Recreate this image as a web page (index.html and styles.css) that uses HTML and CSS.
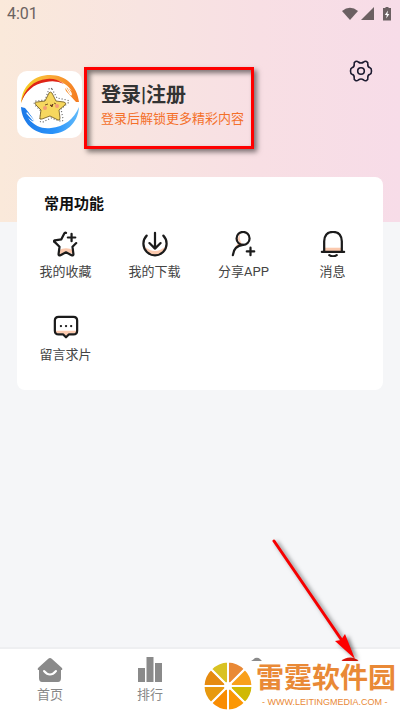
FILE: index.html
```html
<!DOCTYPE html>
<html lang="zh-CN">
<head>
<meta charset="utf-8">
<meta name="viewport" content="width=device-width, initial-scale=1">
<title>我的</title>
<link rel="stylesheet" href="styles.css">
</head>
<body>
<div class="screen">
  <header class="hero">
    <div class="status">
      <span class="time">4:01</span>
      <svg class="status-icons" width="51" height="16" viewBox="0 0 51 16" fill="#6b6062" aria-hidden="true">
        <path d="M0 5Q8-1.500 16 5L8 14Z"/>
        <path d="M19 14 32 1V14Z"/>
        <path d="M43.500 1h3v1h2.500v12.500h-8V2h2.500Z"/>
        <path d="M46 4.500 42.800 9h2l-.6 3.500L47.400 8h-2Z" fill="#fff"/>
      </svg>
    </div>
    <div class="profile">
      <svg class="avatar" width="65" height="67" viewBox="0 0 65 67" aria-hidden="true">
        <defs>
          <linearGradient id="warm" x1="0" x2="1"><stop offset="0" stop-color="#f3d21f"/><stop offset=".45" stop-color="#fbb03a"/><stop offset="1" stop-color="#f47a20"/></linearGradient>
          <linearGradient id="cool" x1="0" x2="1"><stop offset="0" stop-color="#1c79e8"/><stop offset=".6" stop-color="#2b94fa"/><stop offset="1" stop-color="#60bafa"/></linearGradient>
        </defs>
        <rect width="65" height="67" rx="10" fill="#fff"/>
        <path d="M4 32C5 14 18 4 33 4c16 0 27 11 29 27h-3L49 20q-2-4 2-3l4 3C48 11 40 8 31 9 17 10 8 20 4 32Z" fill="url(#warm)"/>
        <path d="M4 32C7 18 17 9 30 8q9-1 17 5-8-4-18-2C16 13 8 21 4 32Z" fill="#df2416"/>
        <path d="m49 17 4 6q2 2 1-1l-3-5" fill="none" stroke="#fff" stroke-width="1.200" stroke-linecap="round"/>
        <path d="M62 36C61 53 48 63 33 63 17 63 5 52 4 36l4 1 9 11q1 3-2 2l-4-3c7 9 15 11 23 10 13-1 23-9 28-21Z" fill="url(#cool)"/>
        <path d="m10 42 6 7q2 1 1-1l-4-6" fill="none" stroke="#fff" stroke-width="1.200" stroke-linecap="round"/>
        <path d="m35 18 5 9 10 2q3 1 1 3l-7 6 2 10q0 3-3 2l-9-3-8 4q-3 1-3-2l1-9-6-6q-2-3 1-4l9-1 4-11q1-2 3 0Z" fill="none" stroke="#666" stroke-width="1.200" stroke-dasharray="1 2"/>
        <path d="m35 22 4 8 8 1q3 1 1 3l-6 5 1 8q0 3-2 2l-8-4-8 3q-3 1-2-2l1-7-5-5q-2-3 1-3l8-1 4-8q1-2 3 0Z" fill="#f6d75f" stroke="#6b541c" stroke-width=".8" stroke-linejoin="round"/>
        <path d="m28 34 3-1M37 32l2 1M33 34q2 1 3-1l-1 3Z" fill="#9b3023" stroke="#5e381c" stroke-width=".8"/>
        <circle cx="28" cy="37" r="2" fill="#f49b76"/><circle cx="40" cy="35" r="2" fill="#f49b76"/>
      </svg>
      <a class="login" href="#login">
        <span class="login-title">登录|注册</span>
        <span class="login-note">登录后解锁更多精彩内容</span>
      </a>
      <button class="settings" type="button" aria-label="设置">
        <svg width="24" height="24" viewBox="-12 -12 24 24" fill="none" stroke="#1d1b30" stroke-width="1.600" stroke-linejoin="round" aria-hidden="true">
          <path d="M-5.500-9.500Q-4-10.200-2.700-9Q0-7 2.700-9Q4-10.200 5.500-9.500Q7.300-8.500 6.800-7Q6.500-4 9-3.300Q10.500-2.800 10.500 0Q10.500 2.800 9 3.300Q6.500 4 6.800 7Q7.300 8.500 5.500 9.500Q4 10.200 2.700 9Q0 7-2.700 9Q-4 10.200-5.500 9.500Q-7.300 8.500-6.800 7Q-6.500 4-9 3.300Q-10.500 2.800-10.500 0Q-10.500-2.800-9-3.300Q-6.500-4-6.800-7Q-7.300-8.500-5.500-9.500Z"/>
          <circle r="3.300"/>
        </svg>
      </button>
      <span class="highlight"></span>
    </div>
  </header>

  <main class="card">
    <h1 class="card-title">常用功能</h1>
    <div class="grid">
      <a class="item" href="#favorites">
        <svg class="icon" viewBox="0 0 28 28" aria-hidden="true">
          <path d="M6 21q8-5 16 0v4l-8-3-7 4Z" fill="#fbc9ae"/>
          <path d="M14 2q-1-1-2 1L9 9 2 10q-2 1 0 2l5 5-1 8q0 2 2 1l6-3 6 3q2 1 2-1l-1-8 4-4"/>
          <path d="M20 3v8M16 7h8"/>
        </svg>
        <span>我的收藏</span>
      </a>
      <a class="item" href="#downloads">
        <svg class="icon" viewBox="0 0 28 28" aria-hidden="true">
          <path d="M3 17q11 9 22 0-3 9-11 9T3 17Z" fill="#fbc9ae"/>
          <path d="M5 5a12.500 12.500 0 1 0 18 0M14 2v17M8 13l6 6 6-6"/>
        </svg>
        <span>我的下载</span>
      </a>
      <a class="item" href="#share">
        <svg class="icon" viewBox="0 0 28 28" aria-hidden="true">
          <path d="M10 3q-2 6 2 11-4 0-8 8 0-8 6-9-5-4 0-10Z" fill="#fbc9ae"/>
          <circle cx="13" cy="8" r="7"/><path d="M13 15Q3 16 2 26M21 18v8M17 22h8"/>
        </svg>
        <span>分享APP</span>
      </a>
      <a class="item" href="#messages">
        <svg class="icon" viewBox="0 0 28 28" aria-hidden="true">
          <path d="M5 18h18v4H5Z" fill="#fbc9ae"/>
          <path d="M2 22.500h24M4.500 22V11Q5 1 14 1t9.500 10v11M10 26q4 2.500 8 0"/>
        </svg>
        <span>消息</span>
      </a>
      <a class="item" href="#requests">
        <svg class="icon" viewBox="0 0 28 28" aria-hidden="true">
          <path d="M3 18h22v3h-8l-3 3-3-3H3Z" fill="#fbc9ae"/>
          <path d="M6 3h16q4 0 4 4v11q0 4-4 4h-5l-3 3-3-3H6q-4 0-4-4V7q0-4 4-4Z"/>
          <path d="M8.500 13h.1M14 13h.1M19.500 13h.1"/>
        </svg>
        <span>留言求片</span>
      </a>
    </div>
  </main>

  <nav class="tabs">
    <a class="tab" href="#home">
      <svg width="26" height="26" viewBox="0 0 26 26" aria-hidden="true">
        <path d="M11 2q2-2 4 0l10 9q1 2-1 2v8q0 4-3 4H5q-3 0-3-4v-8q-2 0-1-2Z" fill="#8a8a8a"/>
        <path d="M7 14q6 7 12 0" fill="none" stroke="#fff" stroke-width="2" stroke-linecap="round"/>
      </svg>
      <span>首页</span>
    </a>
    <a class="tab" href="#ranking">
      <svg width="26" height="26" viewBox="0 0 26 26" fill="#8a8a8a" aria-hidden="true">
        <path d="M1 11h7v14H1ZM9.500 0h7v25h-7ZM18 6h7v19h-7Z"/>
      </svg>
      <span>排行</span>
    </a>
    <a class="tab" href="#topics" aria-label="专题">
      <svg width="26" height="26" viewBox="0 0 26 26" fill="#8a8a8a" aria-hidden="true"><path d="M14 4q2-1 4-3 3-1 5 1l3 3v16H9V7Z"/></svg>
    </a>
    <a class="tab" href="#me" aria-label="我的">
      <svg width="26" height="26" viewBox="0 0 26 26" fill="#d4140c" aria-hidden="true"><circle cx="13" cy="13" r="12.500"/></svg>
    </a>
    <div class="mark">
      <svg class="fruit" width="48" height="50" viewBox="-24 -25 48 50" aria-hidden="true">
        <g stroke="#fff" stroke-width="2">
          <path d="M0 0V-24.500A24.500 24.500 0 0 1 17-17Z" fill="#e98935"/>
          <path d="M0 0 17-17A24.500 24.500 0 0 1 24.500 0Z" fill="#f9a01b"/>
          <path d="M0 0H24.500A24.500 24.500 0 0 1 17 17Z" fill="#d0b904"/>
          <path d="M0 0 17 17A24.500 24.500 0 0 1 0 24.500Z" fill="#fb9704"/>
          <path d="M0 0V24.500A24.500 24.500 0 0 1-17 17Z" fill="#f98d02"/>
          <path d="M0 0-17 17A24.500 24.500 0 0 1-24.500 0Z" fill="#e7990f"/>
          <path d="M0 0H-24.500A24.500 24.500 0 0 1-17-17Z" fill="#e68b10"/>
          <path d="M0 0-17-17A24.500 24.500 0 0 1 0-24.500Z" fill="#d9c222"/>
        </g>
        <circle r="4" fill="#fff"/>
      </svg>
      <div class="mark-text">
        <span class="mark-name">雷霆软件园</span>
        <span class="mark-url">- WWW.LEITINGMEDIA.COM -</span>
      </div>
    </div>
    <svg class="arrow" width="96" height="130" viewBox="0 0 96 130" aria-hidden="true">
      <path d="M5 5 74 106" fill="none" stroke="#f60000" stroke-width="3" stroke-linecap="round"/>
      <path d="m66 105 6-1 4-6 10 25Z" fill="#fe0000"/>
    </svg>
  </nav>
</div>
</body>
</html>
```

FILE: styles.css
```css
* {
  box-sizing: border-box;
}

body {
  margin: 0;
  background: #f5f6f8;
  color: #444;
  font-family: Roboto, "Noto Sans CJK SC", sans-serif;
}

a {
  color: inherit;
  text-decoration: none;
}

svg {
  display: block;
}

.screen {
  display: flex;
  flex-direction: column;
  min-height: 100vh;
  overflow: hidden;
}

.hero {
  padding-bottom: 84px;
  background: linear-gradient(90deg, #fae9da, #f8e4e1 35%, #f8dfe4 65%, #f7dce8);
}

.status {
  display: flex;
  align-items: center;
  justify-content: space-between;
  height: 28px;
  padding: 0 7px;
}

.time {
  color: #6b6260;
  font-size: 16px;
  line-height: 20px;
}

.profile {
  position: relative;
  display: flex;
  align-items: flex-start;
  padding: 43px 16px 0 17px;
}

.login {
  display: flex;
  flex: 1;
  flex-direction: column;
  padding: 10px 0 0 19px;
}

.login-title {
  color: #333;
  font-size: 20px;
  font-weight: 700;
  line-height: 28px;
}

.login-note {
  color: #f4702a;
  font-size: 13px;
  line-height: 20px;
}

.settings {
  margin: -12px 0 0;
  padding: 0 11px;
  border: 0;
  background: none;
}

.highlight {
  position: absolute;
  top: 39px;
  left: 84px;
  width: 170px;
  height: 82px;
  border: 3px solid #fe0000;
  box-shadow: 3px 3px 5px rgba(0, 0, 0, .5), inset 3px 3px 5px rgba(0, 0, 0, .5);
  pointer-events: none;
}

.card {
  margin: -45px 17px 0;
  padding: 16px 6px 25px 4px;
  border-radius: 8px;
  background: #fff;
}

.card-title {
  margin: 0 0 15px;
  padding-left: 23px;
  color: #111;
  font-size: 15px;
  font-weight: 700;
  line-height: 22px;
}

.grid {
  display: grid;
  grid-template-columns: repeat(4, 1fr);
  row-gap: 31px;
}

.item {
  display: flex;
  flex-direction: column;
  align-items: center;
  gap: 4px;
  font-size: 13px;
  line-height: 20px;
}

.icon {
  width: 28px;
  height: 28px;
  padding: 1px;
  fill: none;
  stroke: #1b1b1b;
  stroke-width: 2.4;
  stroke-linecap: round;
  stroke-linejoin: round;
}

.icon [fill] {
  stroke: none;
}

.tabs {
  position: relative;
  display: grid;
  grid-template-columns: repeat(4, 1fr);
  height: 64px;
  margin-top: auto;
  border-top: 2px solid #eeeff1;
  background: #fff;
}

.tab {
  display: flex;
  flex-direction: column;
  align-items: center;
  gap: 2px;
  padding-top: 8px;
  color: #888;
  font-size: 13px;
  line-height: 20px;
}

.arrow {
  position: absolute;
  right: 35px;
  bottom: 45px;
  filter: drop-shadow(3px 2px 2px rgba(0, 0, 0, .5));
}

.mark {
  position: absolute;
  right: 0;
  bottom: 0;
  display: flex;
  gap: 4px;
  width: 200px;
  height: 50px;
  padding-left: 4px;
  background: #fff;
}

.fruit {
  flex: none;
}

.mark-text {
  display: flex;
  flex-direction: column;
  color: #e98936;
  white-space: nowrap;
}

.mark-name {
  font-size: 28px;
  font-weight: 700;
  line-height: 36px;
}

.mark-url {
  padding-left: 6px;
  font-family: "Liberation Sans", sans-serif;
  font-size: 9px;
  line-height: 10px;
}
```
